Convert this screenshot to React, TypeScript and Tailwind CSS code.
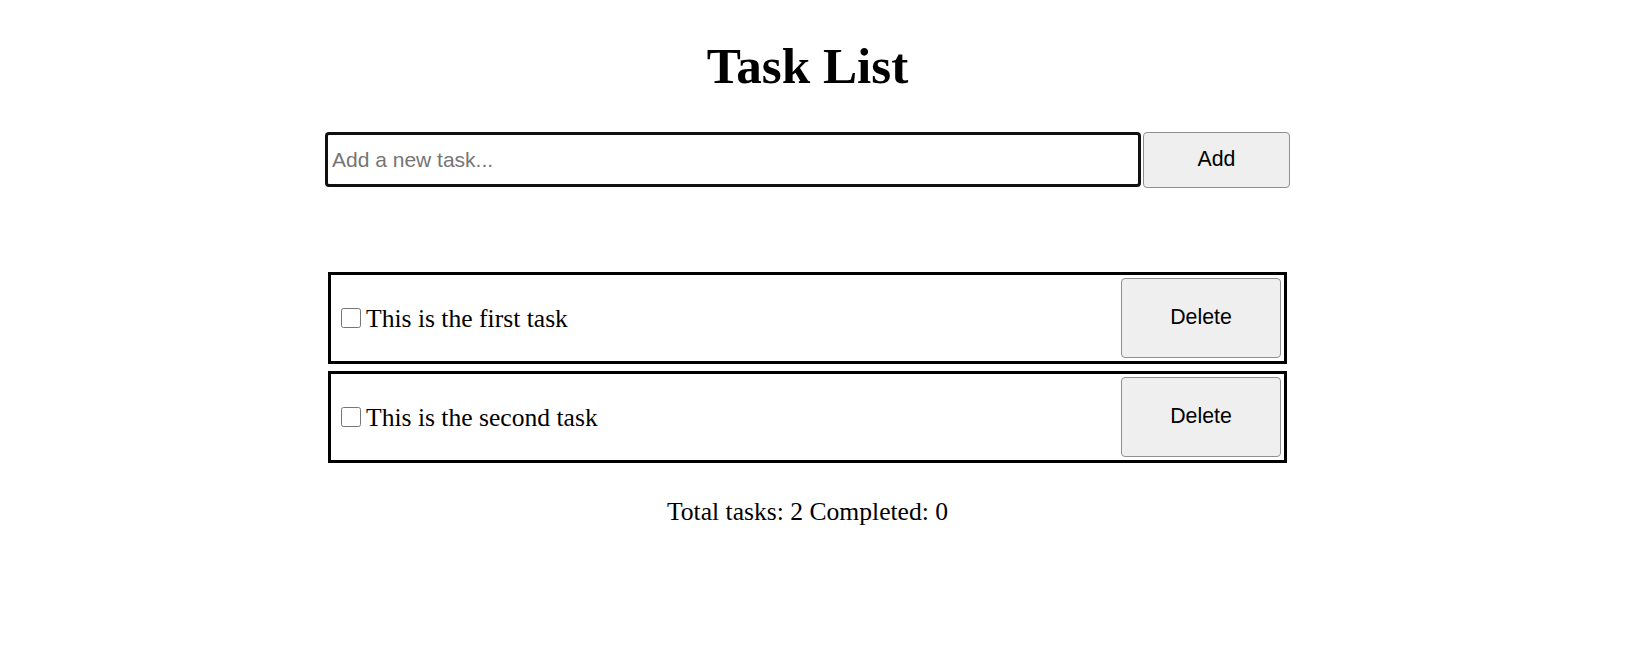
import { useState } from 'react';

type Task = { id: number; text: string; done: boolean };

export default function App() {
    const [tasks, setTasks] = useState<Task[]>([
        { id: 1, text: 'This is the first task', done: false },
        { id: 2, text: 'This is the second task', done: false },
    ]);
    const [draft, setDraft] = useState('');

    const addTask = () => {
        if (!draft.trim()) return;
        setTasks(prev => [...prev, { id: Date.now(), text: draft.trim(), done: false }]);
        setDraft('');
    };

    const completed = tasks.filter(t => t.done).length;

    return (
        <div className="min-h-screen bg-white text-black font-['Liberation_Serif',serif]">
            <div className="w-[1615px] flex flex-col items-center">
                <h1 className="pt-[37px] text-[51.2px] leading-[57px] font-bold">Task List</h1>

                {/* New task form */}
                <div className="mt-[38px] flex items-start w-[965px]">
                    <input
                        type="text"
                        value={draft}
                        onChange={e => setDraft(e.target.value)}
                        onKeyDown={e => e.key === 'Enter' && addTask()}
                        placeholder="Add a new task..."
                        className="w-[816px] h-[55px] px-[4px] border-[3px] border-[#101010] rounded-[4px] outline-none bg-white text-[21px] font-['Liberation_Sans',sans-serif] placeholder:text-[#757575]"
                    />
                    <button
                        onClick={addTask}
                        className="ml-[2px] w-[147px] h-[56px] bg-[#efefef] border border-[#8f8f8f] rounded-[4px] text-[21.3px] font-['Liberation_Sans',sans-serif]"
                    >
                        Add
                    </button>
                </div>

                {/* Task rows */}
                <div className="mt-[84px] w-[959px] flex flex-col gap-[7px]">
                    {tasks.map(task => (
                        <div
                            key={task.id}
                            className="flex items-center justify-between border-[3px] border-black p-[3px]"
                        >
                            <label className="flex items-center text-[25.6px] leading-[29px]">
                                <input
                                    type="checkbox"
                                    checked={task.done}
                                    onChange={() =>
                                        setTasks(prev =>
                                            prev.map(t => (t.id === task.id ? { ...t, done: !t.done } : t))
                                        )
                                    }
                                    className="ml-[7px] mr-[5px] w-[20px] h-[20px]"
                                />
                                <span>{task.text}</span>
                            </label>
                            <button
                                onClick={() => setTasks(prev => prev.filter(t => t.id !== task.id))}
                                className="w-[160px] h-[80px] bg-[#efefef] border border-[#8f8f8f] rounded-[4px] text-[21.3px] font-['Liberation_Sans',sans-serif]"
                            >
                                Delete
                            </button>
                        </div>
                    ))}
                </div>

                <p className="mt-[34px] text-[25.6px] leading-[29px]">
                    Total tasks: {tasks.length} Completed: {completed}
                </p>
            </div>
        </div>
    );
}
